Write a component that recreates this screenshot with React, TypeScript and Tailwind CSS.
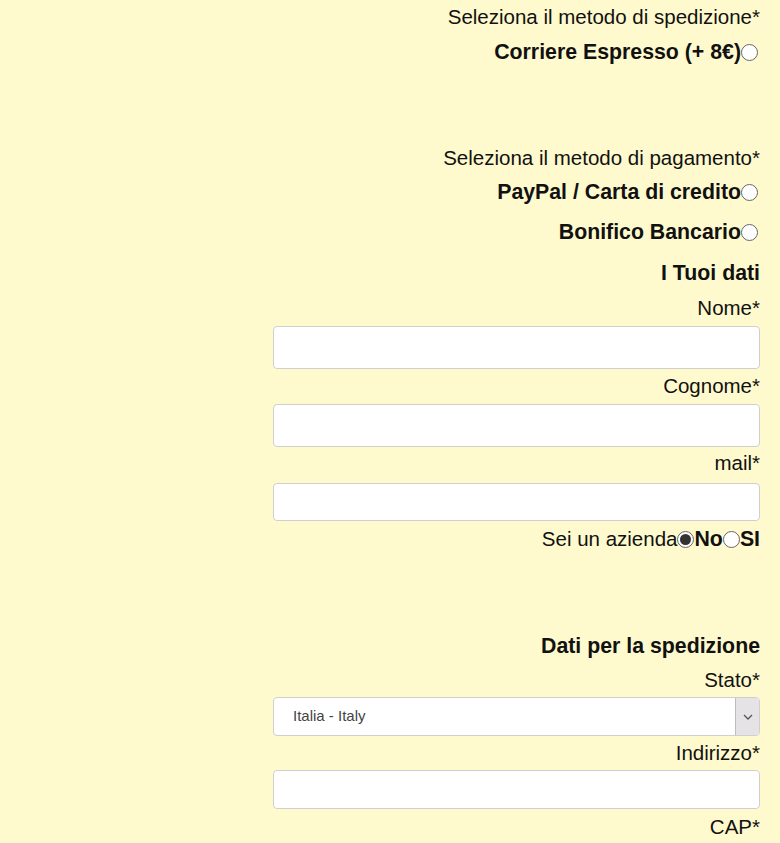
import React from "react";

const font = { fontFamily: '"Liberation Sans", Arial, sans-serif' };

function Radio({ checked = false }: { checked?: boolean }) {
    return (
        <span className="inline-flex h-[17px] w-[17px] shrink-0 items-center justify-center rounded-full border border-[#666] bg-white">
            {checked && <span className="h-[11px] w-[11px] rounded-full bg-[#333]" />}
        </span>
    );
}

function Label({ children, className = "" }: { children: React.ReactNode; className?: string }) {
    return <div className={`h-[22px] leading-[22px] text-[#111] ${className}`}>{children}</div>;
}

function Choice({ text, className = "" }: { text: string; className?: string }) {
    return (
        <div className={`flex h-[22px] items-center text-[21.3px] font-bold text-[#111] ${className}`}>
            <span className="leading-[22px]">{text}</span>
            <Radio />
        </div>
    );
}

function TextInput({ h, className = "" }: { h: string; className?: string }) {
    return (
        <input
            type="text"
            className={`w-[487px] ${h} rounded-[4px] border border-[#cfcfcf] bg-white px-2 outline-none ${className}`}
        />
    );
}

export default function App() {
    return (
        <div className="min-h-[843px] w-full bg-[#fffacd] text-[20.5px]" style={font}>
            <div className="flex flex-col items-end pr-[20px] pt-[6px]">
                <Label>Seleziona il metodo di spedizione*</Label>
                <Choice text="Corriere Espresso (+ 8€)" className="mt-[13px] pr-[2px]" />

                <Label className="mt-[84px]">Seleziona il metodo di pagamento*</Label>
                <Choice text="PayPal / Carta di credito" className="mt-[12px] pr-[2px]" />
                <Choice text="Bonifico Bancario" className="mt-[18px] pr-[2px]" />

                <Label className="mt-[19px] text-[21.3px] font-bold">I Tuoi dati</Label>
                <Label className="mt-[13px]">Nome*</Label>
                <TextInput h="h-[43px]" className="mt-[7px]" />
                <Label className="mt-[6px]">Cognome*</Label>
                <TextInput h="h-[43px]" className="mt-[7px]" />
                <Label className="mt-[5px]">mail*</Label>
                <TextInput h="h-[38px]" className="mt-[9px]" />
                <div className="mt-[7px] flex h-[22px] items-center text-[#111]">
                    <span className="leading-[22px]">Sei un azienda</span>
                    <Radio checked />
                    <span className="text-[21.3px] font-bold leading-[22px]">No</span>
                    <Radio />
                    <span className="text-[21.3px] font-bold leading-[22px]">SI</span>
                </div>

                <Label className="mt-[85px] text-[21.3px] font-bold">Dati per la spedizione</Label>
                <Label className="mt-[12px]">Stato*</Label>
                <div className="mt-[6px] flex h-[39px] w-[487px] items-stretch overflow-hidden rounded-[4px] border border-[#cfcfcf] bg-white">
                    <div className="flex flex-1 items-center pl-[19px] text-[15px] text-[#444]">Italia - Italy</div>
                    <div className="flex w-[24px] items-center justify-center border-l border-[#bdbdbd] bg-[#e6e3e6]">
                        <svg width="10" height="6" viewBox="0 0 10 6" fill="none">
                            <path d="M1 1l4 4 4-4" stroke="#555" strokeWidth="1.3" />
                        </svg>
                    </div>
                </div>
                <Label className="mt-[6px]">Indirizzo*</Label>
                <TextInput h="h-[39px]" className="mt-[6px]" />
                <Label className="mt-[7px]">CAP*</Label>
            </div>
        </div>
    );
}
